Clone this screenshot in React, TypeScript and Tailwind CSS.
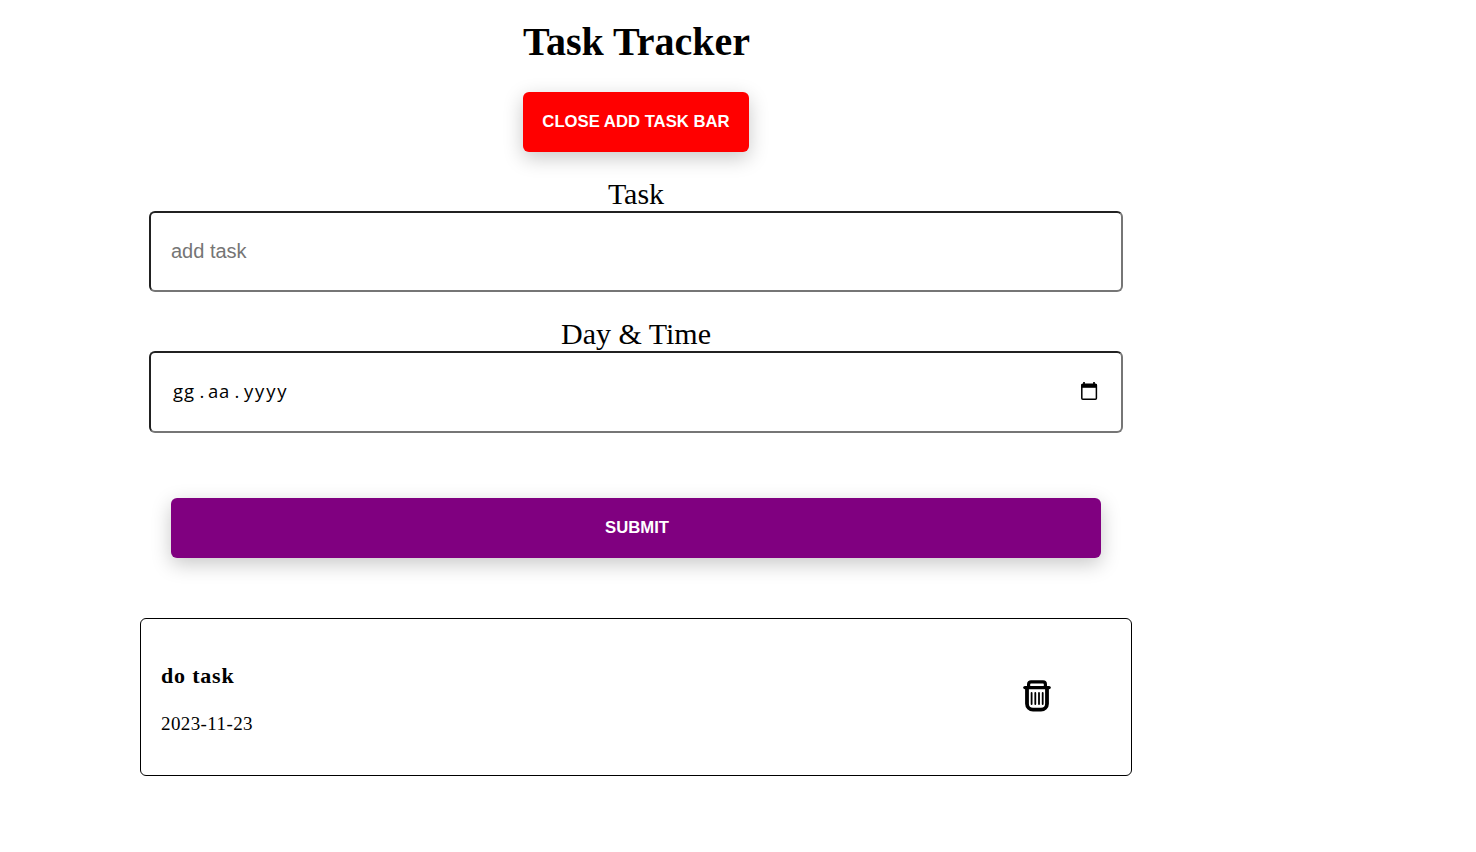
import React from "react";

function Field({ label, height, children }: { label: string; height: string; children: React.ReactNode }) {
  return (
    <div className="flex flex-col px-[9px]">
      <div className="text-center text-[30px] leading-[34px]">{label}</div>
      <div
        className={`${height} flex items-center rounded-[6px] border-2 border-t-[#212121] border-l-[#212121] border-r-[#767676] border-b-[#767676] px-5`}
      >
        {children}
      </div>
    </div>
  );
}

const buttonStyle =
  "h-[60px] rounded-[6px] font-['Liberation_Sans',Arial,sans-serif] text-[16.7px] font-bold leading-none text-white uppercase shadow-[0_6px_20px_0_rgba(0,0,0,0.22)]";

function CalendarIcon() {
  return (
    <svg className="mr-[3px] mb-[2px]" width="18" height="20" viewBox="0 0 18 20" fill="none">
      <path d="M4 1v3M14 1v3" stroke="#000" strokeWidth="1.7" />
      <rect x="1.8" y="3.3" width="14.6" height="14.9" rx="1" stroke="#000" strokeWidth="1.5" />
      <path d="M1.5 3h15.2v3.8H1.5z" fill="#000" />
    </svg>
  );
}

function TrashIcon() {
  return (
    <svg className="mb-[2px]" width="28" height="32" viewBox="0 0 28 32" fill="none" stroke="#000" strokeLinecap="round">
      <path d="M1.9 7.6h24.2" strokeWidth="3.4" />
      <path d="M5.6 7V4.2a2.4 2.4 0 0 1 2.4-2.4h12a2.4 2.4 0 0 1 2.4 2.4V7" strokeWidth="3.2" />
      <path d="M4 8.5v15.2a6 6 0 0 0 6 6h8a6 6 0 0 0 6-6V8.5" strokeWidth="3.8" />
      <path d="M8.6 13v11M12.3 13v11M16 13v11M19.7 13v11" strokeWidth="1.8" />
    </svg>
  );
}

export default function App() {
  return (
    <main className="ml-[140px] flex h-[852px] w-[992px] flex-col bg-white font-['Liberation_Serif','Times_New_Roman',serif] text-black">
      <header className="flex flex-col items-center pt-[19px]">
        <h1 className="pl-[1px] text-[40px] font-bold leading-[46px]">Task Tracker</h1>
        <button className={`${buttonStyle} mt-[27px] w-[226px] bg-[#ff0000]`}>
          Close add task bar
        </button>
      </header>
      <form className="mt-[25px] flex flex-col">
        <Field label="Task" height="h-[81px]">
          <input
            placeholder="add task"
            className="w-full bg-transparent pb-[2px] font-['Liberation_Sans',Arial,sans-serif] text-[20px] outline-none placeholder:text-[#757575]"
          />
        </Field>
        <div className="mt-[25px] flex flex-col">
          <Field label="Day & Time" height="h-[82px]">
            <div className="flex grow items-center pb-[2px] font-['Open_Sans',sans-serif] text-[18.5px] leading-none">
              <span className="ml-[2px] w-[23px] tracking-[0.9px]">gg</span>
              <span className="w-[12px] text-center">.</span>
              <span className="w-[23px] tracking-[0.7px]">aa</span>
              <span className="w-[12px] text-center">.</span>
              <span className="pl-[1px] tracking-[1.8px]">yyyy</span>
            </div>
            <CalendarIcon />
          </Field>
        </div>
        <button type="button" className={`${buttonStyle} mx-[31px] mt-[65px] bg-[#800080] pl-[2px]`}>
          Submit
        </button>
      </form>
      <section className="mt-[60px] flex h-[158px] items-center justify-between rounded-[6px] border border-black pr-[80px] pl-5">
        <div className="pt-[4px]">
          <h3 className="text-[22px] font-bold leading-[26px] tracking-[0.8px]">do task</h3>
          <p className="mt-[23px] text-[19px] leading-[23px] tracking-[0.4px]">2023-11-23</p>
        </div>
        <TrashIcon />
      </section>
    </main>
  );
}
